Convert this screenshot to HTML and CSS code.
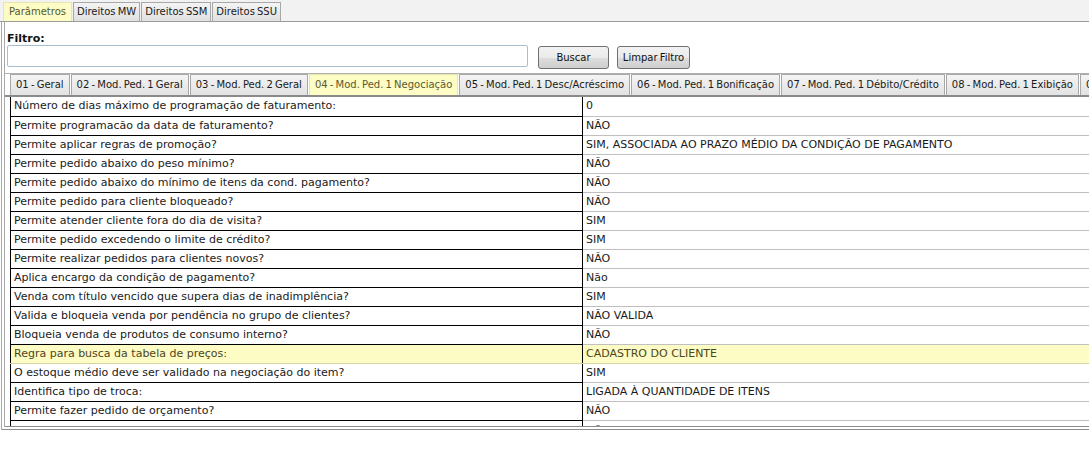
FILE: index.html
```html
<!DOCTYPE html>
<html lang="pt">
<head>
<meta charset="utf-8">
<title>Parâmetros</title>
<link rel="stylesheet" href="styles.css">
</head>
<body>
<div class="top-tabs">
  <div class="tab active">Parâmetros</div>
  <div class="tab">Direitos MW</div>
  <div class="tab">Direitos SSM</div>
  <div class="tab">Direitos SSU</div>
</div>
<div class="panel">
  <div class="filter">
    <label class="filter-label">Filtro:</label>
    <div class="filter-row">
      <input class="filter-input" type="text">
      <button class="btn btn-search">Buscar</button>
      <button class="btn btn-clear">Limpar Filtro</button>
    </div>
  </div>
  <div class="sub-tabs">
    <div class="stab">01 - Geral</div>
    <div class="stab">02 - Mod. Ped. 1 Geral</div>
    <div class="stab">03 - Mod. Ped. 2 Geral</div>
    <div class="stab active">04 - Mod. Ped. 1 Negociação</div>
    <div class="stab">05 - Mod. Ped. 1 Desc/Acréscimo</div>
    <div class="stab">06 - Mod. Ped. 1 Bonificação</div>
    <div class="stab">07 - Mod. Ped. 1 Débito/Crédito</div>
    <div class="stab">08 - Mod. Ped. 1 Exibição</div>
    <div class="stab">09</div>
  </div>
  <div class="grid-wrap">
    <table class="grid">
      <tr><td class="k">Número de dias máximo de programação de faturamento:</td><td class="v">0</td></tr>
      <tr><td class="k">Permite programacão da data de faturamento?</td><td class="v">NÃO</td></tr>
      <tr><td class="k">Permite aplicar regras de promoção?</td><td class="v">SIM, ASSOCIADA AO PRAZO MÉDIO DA CONDIÇÃO DE PAGAMENTO</td></tr>
      <tr><td class="k">Permite pedido abaixo do peso mínimo?</td><td class="v">NÃO</td></tr>
      <tr><td class="k">Permite pedido abaixo do mínimo de itens da cond. pagamento?</td><td class="v">NÃO</td></tr>
      <tr><td class="k">Permite pedido para cliente bloqueado?</td><td class="v">NÃO</td></tr>
      <tr><td class="k">Permite atender cliente fora do dia de visita?</td><td class="v">SIM</td></tr>
      <tr><td class="k">Permite pedido excedendo o limite de crédito?</td><td class="v">SIM</td></tr>
      <tr><td class="k">Permite realizar pedidos para clientes novos?</td><td class="v">NÃO</td></tr>
      <tr><td class="k">Aplica encargo da condição de pagamento?</td><td class="v">Não</td></tr>
      <tr><td class="k">Venda com título vencido que supera dias de inadimplência?</td><td class="v">SIM</td></tr>
      <tr><td class="k">Valida e bloqueia venda por pendência no grupo de clientes?</td><td class="v">NÃO VALIDA</td></tr>
      <tr><td class="k">Bloqueia venda de produtos de consumo interno?</td><td class="v">NÃO</td></tr>
      <tr class="sel"><td class="k">Regra para busca da tabela de preços:</td><td class="v">CADASTRO DO CLIENTE</td></tr>
      <tr><td class="k">O estoque médio deve ser validado na negociação do item?</td><td class="v">SIM</td></tr>
      <tr><td class="k">Identifica tipo de troca:</td><td class="v">LIGADA À QUANTIDADE DE ITENS</td></tr>
      <tr><td class="k">Permite fazer pedido de orçamento?</td><td class="v">NÃO</td></tr>
      <tr class="last"><td class="k">Permite alterar o preço de venda na negociação do item?</td><td class="v">NÃO</td></tr>
    </table>
  </div>
</div>
</body>
</html>
```
FILE: styles.css
```css
* { box-sizing: border-box; }
html, body {
  margin: 0;
  padding: 0;
  background: #ffffff;
  width: 1089px;
  height: 460px;
  overflow: hidden;
  font-family: "DejaVu Sans", Verdana, sans-serif;
  font-size: 11px;
  color: #1a1a1a;
}
.top-tabs {
  display: flex;
  align-items: flex-end;
  height: 22px;
  padding-left: 3px;
  background: #f2f2f2;
  border-bottom: 1px solid #9c9c9c;
}
.tab {
  height: 19px;
  line-height: 18px;
  padding: 0 3px;
  margin-right: 1px;
  border: 1px solid #a8a8a8;
  border-bottom: none;
  background: linear-gradient(#f4f4f4, #e0e0e0);
  color: #1a1a1a;
  font-size: 10px;
  word-spacing: -1px;
  white-space: nowrap;
}
.tab.active {
  background: #fdfcc4;
  border-color: #e8e6b0;
  color: #5a5a30;
  padding: 0 5px;
}
.panel {
  margin-left: 1px;
  border-left: 4px double #a8a8a8;
  border-bottom: 4px double #8c8c8c;
  height: 408px;
  overflow: hidden;
  display: flex;
  flex-direction: column;
}
.filter {
  flex: none;
  padding: 10px 0 0 2px;
  height: 52px;
  border-bottom: 1px solid #b0b0b0;
}
.filter-label {
  display: block;
  font-weight: bold;
  font-size: 11px;
  line-height: 13px;
  color: #111;
}
.filter-row {
  display: flex;
  align-items: flex-start;
  margin-top: 0;
}
.filter-input {
  width: 521px;
  height: 22px;
  border: 1px solid #a9bdd0;
  border-radius: 2px;
  background: #fff;
  margin: 0;
}
.btn {
  height: 23px;
  margin: 1px 0 0 10px;
  padding: 0;
  border: 1px solid #707070;
  border-radius: 3px;
  background: linear-gradient(#f2f2f2 0%, #ebebeb 50%, #dddddd 51%, #cfcfcf 100%);
  font-family: "DejaVu Sans", Verdana, sans-serif;
  font-size: 10px;
  word-spacing: -1px;
  color: #111;
}
.btn-search { width: 71px; }
.btn-clear { width: 73px; margin-left: 8px; }
.sub-tabs {
  flex: none;
  display: flex;
  padding-left: 5px;
  height: 23px;
  border-bottom: 2px solid #8a8a8a;
  white-space: nowrap;
  overflow: hidden;
}
.stab {
  flex: none;
  height: 21px;
  line-height: 20px;
  padding: 0 5px;
  margin-right: 1px;
  border: 1px solid #a8a8a8;
  border-bottom: none;
  background: linear-gradient(#f4f4f4, #e2e2e2);
  font-size: 10px;
  word-spacing: -1px;
}
.stab.active {
  background: #fdfcc4;
  border-color: #e8e6b0;
  color: #5a5a30;
}
.grid-wrap {
  flex: 1;
  overflow: hidden;
  padding-left: 5px;
}
.grid {
  border-collapse: collapse;
  width: 1090px;
  table-layout: fixed;
}
.grid td {
  height: 19px;
  padding: 0 3px;
  line-height: 18px;
  white-space: nowrap;
  overflow: hidden;
}
.grid td.k {
  width: 572px;
  border-left: 1px solid #000;
  border-right: 1px solid #000;
  border-bottom: 1px solid #000;
}
.grid td.v {
  border-bottom: 1px solid #c0c0c0;
}
.grid tr.sel td {
  background: #fdfcc4;
  color: #4d4620;
  border-bottom-color: #d6d4a0;
}
.grid tr.last td {
  line-height: 21px;
  vertical-align: top;
}
```
